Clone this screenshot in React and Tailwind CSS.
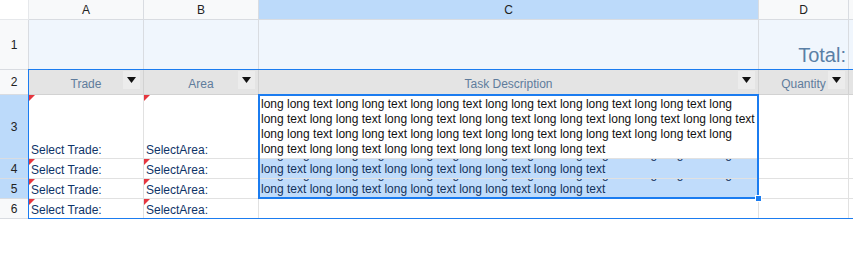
import React from 'react';

const COLS = 'grid grid-cols-[29px_115px_115px_500px_90px_1fr]';

const longLine = (n, lead) =>
  (lead ? 'long text ' : '') + Array(n).fill('long long text').join(' ') + (lead ? '' : ' long');

const taskLines = [longLine(6, false), longLine(6, true), longLine(6, false), longLine(4, true)];

const FilterButton = () => (
  <div className="absolute right-[3px] top-[1px] w-[17px] h-[18px] bg-[#ececec] flex items-center justify-center">
    <svg width="9" height="6" viewBox="0 0 9 6">
      <path d="M0 0 H9 L4.5 6 Z" fill="#111" />
    </svg>
  </div>
);

const RedFlag = () => (
  <svg className="absolute left-0 top-0" width="6" height="6" viewBox="0 0 6 6">
    <path d="M0 0 H6 L0 6 Z" fill="#e5363f" />
  </svg>
);

const RowHeader = ({ n, active, h }) => (
  <div
    className={`${h} flex items-center justify-center border-r border-b border-[#d9dce1] text-[12px] text-[#222] ${
      active ? 'bg-[#bcdafa]' : 'bg-[#f8f9fa]'
    }`}
  >
    {n}
  </div>
);

const SelectCell = ({ label }) => (
  <div className="relative flex items-end pl-[2px] border-r border-b border-[#e1e1e1] text-[12px] leading-[15px] text-[#0f3468] overflow-hidden whitespace-nowrap">
    <RedFlag />
    {label}
  </div>
);

// clipped rows only keep the tail of the wrapped text, like the sheet does
const TaskCell = ({ lines, selected }) => (
  <div
    className={`flex flex-col justify-end pl-[2px] pb-[1px] border-r border-b border-[#e1e1e1] overflow-hidden text-[12px] leading-[15px] whitespace-nowrap ${
      selected ? 'bg-[#c0dcfb] text-[#13325c]' : 'text-[#111]'
    }`}
  >
    {lines.map((l, i) => (
      <div key={i}>{l}</div>
    ))}
  </div>
);

const BodyRow = ({ n, h, active, selected, lines }) => (
  <div className={`${COLS} ${h}`}>
    <RowHeader n={n} active={active} h={h} />
    <SelectCell label="Select Trade:" />
    <SelectCell label="SelectArea:" />
    <TaskCell lines={lines} selected={selected} />
    <div className="border-r border-b border-[#e1e1e1]" />
    <div className="border-b border-[#e1e1e1]" />
  </div>
);

export default function App() {
  return (
    <div className="relative w-[853px] h-[255px] overflow-hidden bg-white font-['Liberation_Sans',Arial,sans-serif]">
      {/* column letters */}
      <div className={`${COLS} h-[20px] text-[12px] text-[#222]`}>
        <div className="bg-white border-r border-b border-[#e6e8eb]" />
        <div className="flex items-center justify-center bg-[#f8f9fa] border-r border-b border-[#d9dce1]">A</div>
        <div className="flex items-center justify-center bg-[#f8f9fa] border-r border-b border-[#d9dce1]">B</div>
        <div className="flex items-center justify-center bg-[#bcdafa] border-r border-b border-[#d9dce1]">C</div>
        <div className="flex items-center justify-center bg-[#f8f9fa] border-r border-b border-[#d9dce1]">D</div>
        <div className="bg-[#f8f9fa] border-b border-[#d9dce1]" />
      </div>

      {/* row 1 */}
      <div className={`${COLS} h-[50px]`}>
        <RowHeader n={1} h="h-[50px]" />
        <div className="bg-[#f0f6fd] border-r border-b border-[#d9dce1]" />
        <div className="bg-[#f0f6fd] border-r border-b border-[#d9dce1]" />
        <div className="bg-[#f0f6fd] border-r border-b border-[#d9dce1]" />
        <div className="flex items-end justify-end pr-[2px] pb-[2px] bg-[#f0f6fd] border-r border-b border-[#d9dce1] text-[20px] leading-[24px] text-[#5a7fa6] whitespace-nowrap">
          Total:
        </div>
        <div className="bg-[#f0f6fd] border-b border-[#d9dce1]" />
      </div>

      {/* row 2: table headers */}
      <div className={`${COLS} h-[25px]`}>
        <RowHeader n={2} h="h-[25px]" />
        {['Trade', 'Area', 'Task Description', 'Quantity'].map((t) => (
          <div
            key={t}
            className="relative flex items-end justify-center pb-[2px] bg-[#e4e4e4] border-r border-b border-[#d2d2d2] text-[12px] leading-[15px] text-[#5f7c9c] whitespace-nowrap"
          >
            {t}
            <FilterButton />
          </div>
        ))}
        <div className="bg-[#e4e4e4] border-b border-[#d2d2d2]" />
      </div>

      <BodyRow n={3} h="h-[64px]" active lines={taskLines} />
      <BodyRow n={4} h="h-[20px]" active selected lines={taskLines.slice(2)} />
      <BodyRow n={5} h="h-[20px]" active selected lines={taskLines.slice(2)} />
      <BodyRow n={6} h="h-[20px]" lines={[]} />

      {/* table range outline */}
      <div className="absolute left-[28px] top-[69px] w-[900px] h-[150px] border border-[#1b7cf0] pointer-events-none" />

      {/* selection C3:C5 */}
      <div className="absolute left-[258px] top-[94px] w-[501px] h-[105px] border-2 border-[#1b7cf0] pointer-events-none" />
      <div className="absolute left-[756px] top-[196px] w-[5px] h-[5px] bg-[#1b7cf0] border border-white box-content -ml-[1px] -mt-[1px]" />
    </div>
  );
}
